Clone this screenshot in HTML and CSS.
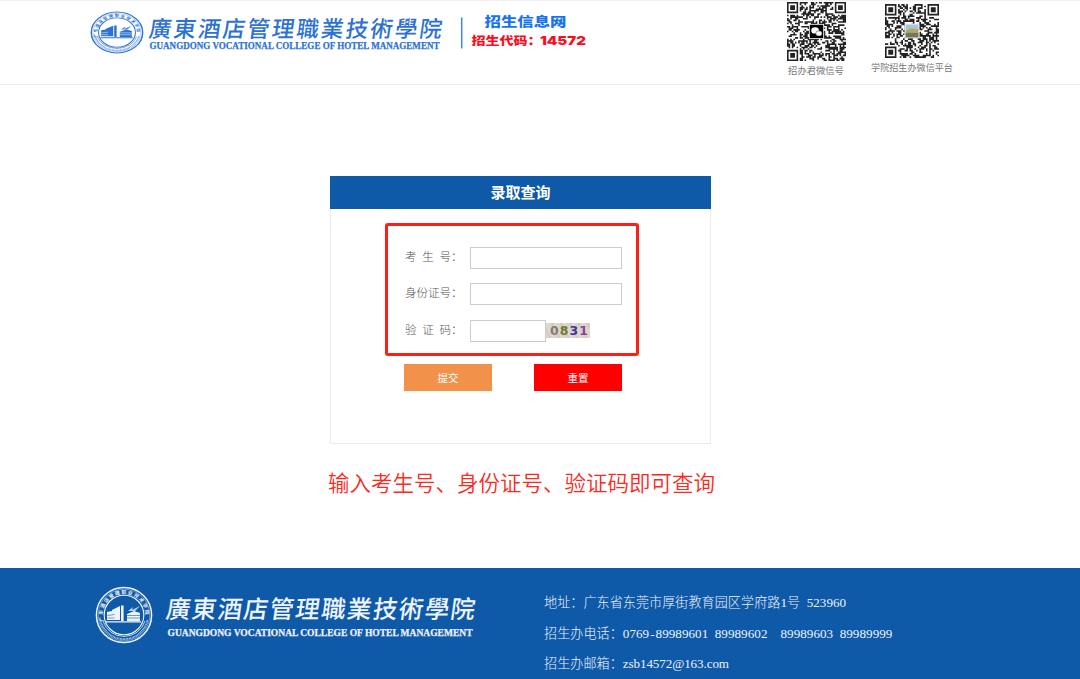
FILE: index.html
```html
<!DOCTYPE html>
<html lang="zh-CN">
<head>
  <meta charset="UTF-8">
  <meta name="viewport" content="width=device-width, initial-scale=1.0">
  <title>录取查询</title>
  <link rel="stylesheet" href="styles.css">
</head>
<body>
  <!-- Shared emblem -->
  <svg class="defs" width="0" height="0">
    <defs>
      <path id="ringTop" d="M8.5 35a21.3 21.3 0 1 1 41 0"/>
    </defs>
    <symbol id="emblem" viewBox="0 0 58 58" preserveAspectRatio="none" overflow="visible">
      <circle cx="29" cy="29" r="27.6" fill="none" stroke="currentColor" stroke-width="1.5"/>
      <circle cx="29" cy="29" r="25.8" fill="none" stroke="currentColor" stroke-width=".4"/>
      <circle cx="29" cy="29" r="19.8" fill="none" stroke="currentColor" stroke-width="1.1"/>
      <text class="ring-cn"><textPath href="#ringTop" textLength="72">广东酒店管理职业技术学院</textPath></text>
      <path d="M5.500 34a24 24 0 0 0 47 0" fill="none" stroke="currentColor" stroke-width="1.800" stroke-dasharray=".9 .6" opacity=".75"/>
      <path d="M8 35a22 22 0 0 0 42 0" fill="none" stroke="currentColor" stroke-width=".8"/>
      <g fill="currentColor">
        <path d="M12 26l5-1v-1l8-4v14H12z"/>
        <path d="M26 19.5h2.6V35H26z"/>
        <path d="M32 28l7-3 6 2v8H32z"/>
        <path d="M11 35.3h35v1.3H11z"/>
        <path d="M33 25l5-4-1 3 8-4-5 5z" opacity=".8"/>
      </g>
      <path d="M12.500 29.500l7-1M12.500 32h7M32 29.500h13M32 32h13" stroke="var(--hole)" stroke-width=".6"/>
    </symbol>
  </svg>

  <header class="header">
    <svg class="header-logo" width="500" height="60" viewBox="88 0 500 60">
      <use href="#emblem" x="90" y="11" width="54" height="43"/>
      <text class="school-cn" x="0" y="0" font-size="22.500" textLength="293" transform="translate(148 36.500) skewX(-8)">廣東酒店管理職業技術學院</text>
      <text class="school-en" x="149.500" y="49.300" font-size="9.500" textLength="290" lengthAdjust="spacingAndGlyphs">GUANGDONG VOCATIONAL COLLEGE OF HOTEL MANAGEMENT</text>
      <path d="M461.700 17.500v31" stroke="#3f85e8" stroke-width="1.500"/>
      <text class="site-name" x="484.500" y="26" font-size="13" textLength="82" lengthAdjust="spacingAndGlyphs">招生信息网</text>
      <text class="site-code" x="471.500" y="45" font-size="11.500" textLength="70" lengthAdjust="spacingAndGlyphs">招生代码：</text>
      <text class="site-code" x="540" y="45" font-size="12" textLength="46" lengthAdjust="spacingAndGlyphs">14572</text>
    </svg>
    <div class="codes">
      <figure class="code code-office">
        <svg class="qr" data-seed="7" width="59" height="59" viewBox="0 0 37 37">
          <g class="badge">
            <rect x="14" y="14" width="9" height="9" fill="#000" stroke="#fff" stroke-width=".5"/>
            <ellipse cx="17.600" cy="17.800" rx="2.400" ry="2" fill="#fff"/>
            <ellipse cx="20" cy="19.700" rx="2" ry="1.600" fill="#fff" stroke="#000" stroke-width=".25"/>
          </g>
        </svg>
        <figcaption>招办君微信号</figcaption>
      </figure>
      <figure class="code code-platform">
        <svg class="qr" data-seed="23" width="54" height="54" viewBox="0 0 33 33">
          <g class="badge">
            <rect x="12" y="12" width="9" height="9" fill="#fff"/>
            <rect x="12.500" y="12.500" width="8" height="4" fill="#a9c5dc"/>
            <path d="M12.500 16.500l3-1.500 5 .5v2h-8z" fill="#bba55c"/>
            <rect x="12.500" y="17.500" width="8" height="3" fill="#6d7a55"/>
          </g>
        </svg>
        <figcaption>学院招生办微信平台</figcaption>
      </figure>
    </div>
  </header>

  <main class="main">
    <form class="query" id="queryForm">
      <h1>录取查询</h1>
      <div class="fields">
        <div class="field">
          <label class="spaced" for="examNo">考 生 号：</label>
          <input type="text" id="examNo" name="examNo">
        </div>
        <div class="field">
          <label for="idNo">身份证号：</label>
          <input type="text" id="idNo" name="idNo">
        </div>
        <div class="field">
          <label class="spaced" for="captcha">验 证 码：</label>
          <input class="short" type="text" id="captcha" name="captcha">
          <span class="captcha"><i>0</i><i>8</i><i>3</i><i>1</i></span>
        </div>
      </div>
      <div class="actions">
        <button class="submit" type="submit">提交</button>
        <button class="reset" type="reset">重置</button>
      </div>
    </form>
    <p class="tip">输入考生号、身份证号、验证码即可查询</p>
  </main>

  <footer class="footer">
    <svg class="footer-logo" width="390" height="64" viewBox="90 582 390 64">
      <use href="#emblem" x="95" y="586" width="58" height="58"/>
      <text class="school-cn" x="0" y="0" font-size="24.500" textLength="309" transform="translate(165 618) skewX(-8)">廣東酒店管理職業技術學院</text>
      <text class="school-en" x="167.500" y="636.300" font-size="10" textLength="305" lengthAdjust="spacingAndGlyphs">GUANGDONG VOCATIONAL COLLEGE OF HOTEL MANAGEMENT</text>
    </svg>
    <address class="contact">
      <p>地址：广东省东莞市厚街教育园区学府路1号 523960</p>
      <p>招生办电话：0769<span class="dash">-</span>89989601 89989602&nbsp; 89989603 89989999</p>
      <p>招生办邮箱：<span class="mail">zsb14572@163.com</span></p>
    </address>
  </footer>

  <script src="qr.js"></script>
</body>
</html>
```
FILE: styles.css
```css
:root {
  --blue: #0e59a8;
  --logo-blue: #2d72d2;
  --cjk: "Noto Sans CJK SC", sans-serif;
}

* {
  box-sizing: border-box;
}

body {
  margin: 0;
  min-height: 679px;
  display: flex;
  flex-direction: column;
  background: #fff;
  font-family: var(--cjk);
  color: #666;
  overflow: hidden;
}

p, h1, figure {
  margin: 0;
}

.defs {
  position: absolute;
}

/* Header */
.header {
  display: flex;
  height: 85px;
  padding-left: 88px;
  border-top: 1px solid #f0f0f0;
  border-bottom: 1px solid #ebebeb;
  color: var(--logo-blue);
  --hole: #fff;
}

.header-logo {
  margin-top: -1px;
  overflow: visible;
}

.ring-cn {
  font-family: "Noto Sans CJK SC", sans-serif;
  font-size: 4.8px;
  font-weight: 700;
  fill: currentColor;
}

.school-cn {
  font-family: "Noto Sans CJK TC", sans-serif;
  font-weight: 500;
  fill: currentColor;
}

.school-en {
  font-family: "Liberation Serif", serif;
  font-weight: 700;
  fill: currentColor;
  stroke: currentColor;
  stroke-width: 0.25;
}

.site-name, .site-code {
  font-family: Inter, "Noto Sans CJK SC", sans-serif;
  font-weight: 900;
  fill: #1774f0;
}

.site-code {
  fill: #fb0d1b;
}

.codes {
  display: flex;
  align-items: flex-start;
  gap: 25px;
  margin-left: 198.5px;
}

.code {
  display: flex;
  flex-direction: column;
  align-items: center;
  white-space: nowrap;
  color: #777;
}

.code-office {
  width: 59px;
  padding-top: 1px;
  font-size: 9.3px;
}

.code-platform {
  width: 83px;
  padding-top: 3px;
  font-size: 9.1px;
}

.code figcaption {
  margin-top: 3px;
  line-height: 12px;
}

/* Query form */
.main {
  flex: 1;
  padding: 91px 0 0 330px;
}

.query {
  width: 381px;
  height: 268px;
  border: 1px solid #ebebeb;
  border-top: 0;
}

.query h1 {
  height: 33px;
  margin: 0 -1px;
  background: var(--blue);
  color: #fff;
  font-size: 15px;
  font-weight: 700;
  line-height: 32px;
  text-align: center;
}

.fields {
  display: flex;
  flex-direction: column;
  gap: 14.4px;
  width: 254px;
  height: 133px;
  margin: 14px 0 0 54px;
  padding: 21px 0 0 17px;
  border: 3px solid #fb2015;
  border-radius: 3px;
}

.field {
  display: flex;
  align-items: center;
  height: 22px;
}

.field label {
  width: 65px;
  padding-bottom: 4px;
  color: #555;
  font-size: 11.5px;
  font-weight: 300;
  white-space: nowrap;
}

.field .spaced {
  word-spacing: 3.2px;
}

.field input {
  width: 152px;
  height: 22px;
  padding: 0 4px;
  border: 1px solid #ccc;
  outline: none;
}

.field .short {
  width: 76px;
}

.captcha {
  display: flex;
  justify-content: center;
  gap: 1px;
  width: 44px;
  height: 15px;
  padding-left: 2px;
  background: repeating-linear-gradient(63deg, #ded3cb 0 3px, #d2cac2 3px 5px, #e3d5d0 5px 8px);
  font: 700 12.5px/15px "DejaVu Sans", sans-serif;
}

.captcha i {
  font-style: normal;
  color: #7b8070;
}

.captcha i:nth-child(2) {
  color: #6d7a36;
}

.captcha i:nth-child(3) {
  color: #3d3598;
}

.captcha i:nth-child(4) {
  color: #85469a;
}

.actions {
  display: flex;
  gap: 42px;
  margin: 8px 0 0 73px;
}

.actions button {
  width: 88px;
  height: 27px;
  padding: 0;
  border: 0;
  color: #fff;
  font-family: inherit;
  font-size: 10.5px;
  cursor: pointer;
}

.submit {
  background: #f2914a;
}

.reset {
  background: #fe0000;
}

.tip {
  margin: 22px 0 0 -2px;
  color: #fb2a1d;
  font-size: 21.5px;
  font-weight: 350;
  line-height: 32px;
}

/* Footer */
.footer {
  display: flex;
  height: 111px;
  padding-left: 90px;
  background: var(--blue);
  color: #eef4fc;
  --hole: var(--blue);
}

.footer-logo {
  margin-top: 14px;
  overflow: visible;
}

.contact {
  margin: 20px 0 0 64px;
  font-family: "Liberation Serif", "Noto Sans CJK SC", serif;
  font-size: 13.1px;
  font-style: normal;
  font-weight: 300;
  letter-spacing: 0.04px;
  line-height: 30.6px;
  white-space: nowrap;
  word-spacing: 3.2px;
}

.dash {
  padding: 0 1px;
}

.mail {
  letter-spacing: -0.1px;
}
```
FILE: qr.js
```js
// Fill each QR svg with its finder squares and a seeded module pattern
document.querySelectorAll('.qr').forEach((svg) => {
  const size = svg.viewBox.baseVal.width;
  let seed = Number(svg.dataset.seed);

  const random = () => {
    seed = (seed * 16807) % 2147483647;
    return seed / 2147483647;
  };

  const square = (x, y, n) => `M${x} ${y}h${n}v${n}h${-n}z`;
  let d = '';

  for (let y = 0; y < size; y++) {
    for (let x = 0; x < size; x++) {
      const corner = (x < 8 && y < 8) || (x >= size - 8 && y < 8) || (x < 8 && y >= size - 8);
      const dark = random() > 0.5;
      if (!corner && dark) d += square(x, y, 1);
    }
  }

  [[0, 0], [size - 7, 0], [0, size - 7]].forEach(([x, y]) => {
    d += square(x, y, 7) + square(x + 1, y + 1, 5) + square(x + 2, y + 2, 3);
  });

  const path = document.createElementNS('http://www.w3.org/2000/svg', 'path');
  path.setAttribute('d', d);
  path.setAttribute('fill', '#222');
  path.setAttribute('fill-rule', 'evenodd');
  svg.prepend(path);
});
```
